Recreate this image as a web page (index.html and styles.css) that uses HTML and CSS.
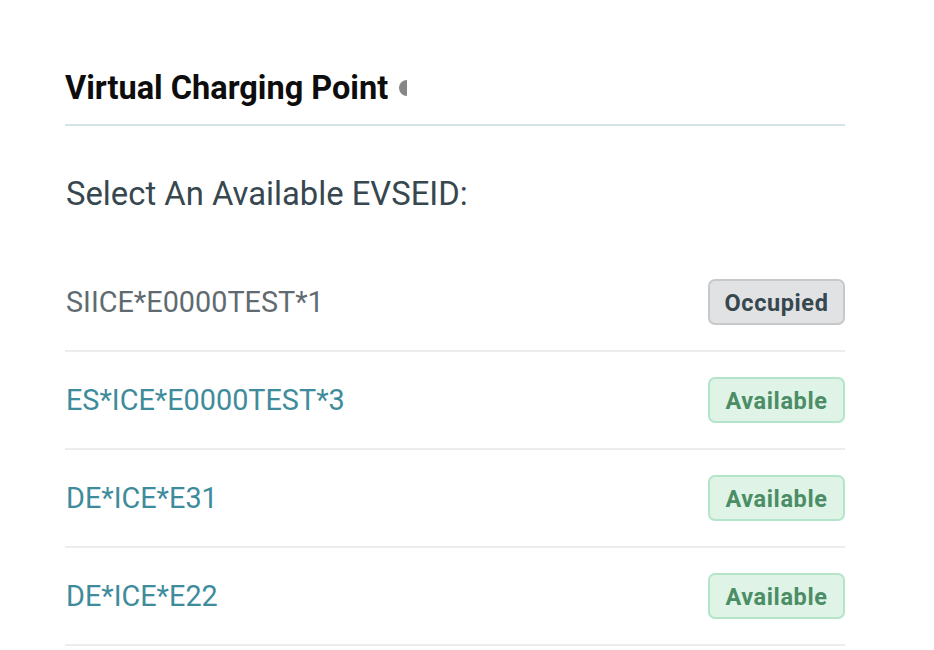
FILE: index.html
```html
<!DOCTYPE html>
<html lang="en">
<head>
    <meta charset="UTF-8">
    <meta name="viewport" content="width=device-width, initial-scale=1.0">
    <title>Virtual Charging Point</title>
    <link rel="stylesheet" href="styles.css">
</head>
<body>
    <div class="panel">
        <!-- Header -->
        <div class="panel-header">
            <div class="title-wrap">
                <h2 class="title">Virtual Charging Point</h2>
                <span class="status-dot"></span>
            </div>
        </div>

        <p class="prompt">Select An Available EVSEID:</p>

        <!-- EVSE list -->
        <ul class="evse-list">
            <li class="evse-row">
                <span class="evse-id busy">SIICE*E0000TEST*1</span>
                <span class="badge badge-occupied">Occupied</span>
            </li>
            <li class="evse-row">
                <a class="evse-id" href="#">ES*ICE*E0000TEST*3</a>
                <span class="badge badge-available">Available</span>
            </li>
            <li class="evse-row">
                <a class="evse-id" href="#">DE*ICE*E31</a>
                <span class="badge badge-available">Available</span>
            </li>
            <li class="evse-row">
                <a class="evse-id" href="#">DE*ICE*E22</a>
                <span class="badge badge-available">Available</span>
            </li>
        </ul>
    </div>
</body>
</html>
```

FILE: styles.css
```css
body {
    margin: 0;
    background-color: #fff;
    font-family: Roboto, "Noto Sans", Arial, sans-serif;
    color: #37474f;
}
.panel {
    width: 780px;
    margin-left: 65px;
    padding-top: 69px;
}
.panel-header {
    border-bottom: 2px solid #d5e2e6;
    padding-bottom: 17px;
}
.title-wrap {
    display: flex;
    align-items: center;
    width: 342px;
    overflow: hidden; /* icon gets cut by the narrow header */
}
.title {
    margin: 0;
    font-size: 32.5px;
    line-height: 38px;
    font-weight: 700;
    color: #0d0d0d;
    white-space: nowrap;
}
.status-dot {
    flex: none;
    width: 16px;
    height: 16px;
    margin-left: 11px;
    border-radius: 50%;
    background-color: #868686;
}
.prompt {
    margin: 0;
    padding: 48px 0 0 1px;
    font-size: 32.8px;
    line-height: 40px;
    color: #37474f;
}
.evse-list {
    list-style: none;
    margin: 40px 0 0;
    padding: 0;
}
.evse-row {
    display: flex;
    align-items: center;
    justify-content: space-between;
    height: 96px;
    border-bottom: 2px solid #ececec;
}
.evse-id {
    padding-left: 1px;
    font-size: 28.8px;
    color: #3e8c9b;
    text-decoration: none;
}
.evse-id.busy {
    color: #5f6b70;
}
.badge {
    box-sizing: border-box;
    width: 137px;
    height: 46px;
    display: flex;
    align-items: center;
    justify-content: center;
    padding-top: 1px;
    border-radius: 7px;
    font-size: 23.5px;
    font-weight: 700;
    letter-spacing: 0.6px;
}
.badge-occupied {
    background-color: #e1e2e4;
    border: 2px solid #c6c8ca;
    color: #37474f;
}
.badge-available {
    background-color: #dff3e7;
    border: 2px solid #b3e6c9;
    color: #4b8d65;
}
```
